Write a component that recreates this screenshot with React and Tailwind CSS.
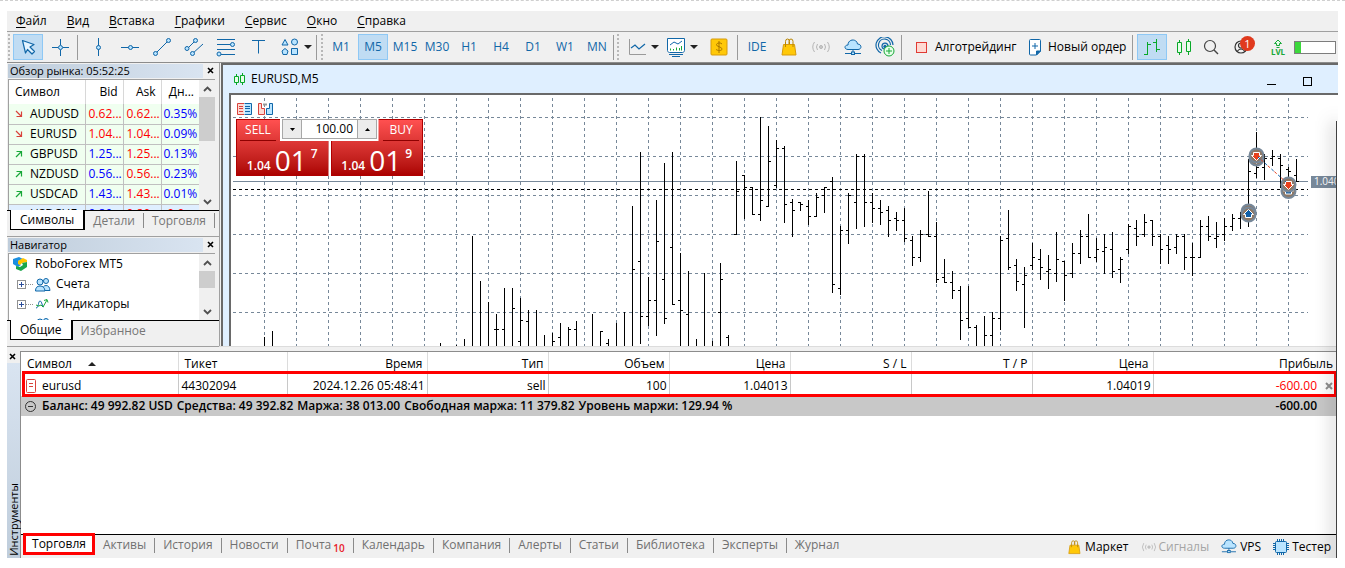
import React from "react";
import { clsx } from "clsx";

const BLUE = "#1167a8";
const SKY = "#b9e4ff";

const menu = ["Файл", "Вид", "Вставка", "Графики", "Сервис", "Окно", "Справка"];
const timeframes = ["M1", "M5", "M15", "M30", "H1", "H4", "D1", "W1", "MN"];

const quotes = [
  { symbol: "AUDUSD", up: false, bid: "0.62...", ask: "0.62...", day: "0.35%", bidUp: false },
  { symbol: "EURUSD", up: false, bid: "1.04...", ask: "1.04...", day: "0.09%", bidUp: false },
  { symbol: "GBPUSD", up: true, bid: "1.25...", ask: "1.25...", day: "0.13%", bidUp: true },
  { symbol: "NZDUSD", up: true, bid: "0.56...", ask: "0.56...", day: "0.23%", bidUp: true },
  { symbol: "USDCAD", up: true, bid: "1.43...", ask: "1.43...", day: "0.01%", bidUp: true },
  { symbol: "USDCHF", up: true, bid: "0.89...", ask: "0.89...", day: "-0.0...", bidUp: true, selected: true, dayDown: true },
];

const BOTTOM = 346;

// [x, high, low, open, close], null = no tick visible
const bars = [
  [264, 337, BOTTOM, null, null],
  [272, 331, BOTTOM, null, null],
  [440, 343, BOTTOM, null, null],
  [456, 345, BOTTOM, null, null],
  [464, 339, BOTTOM, null, null],
  [472, 236, BOTTOM, null, null],
  [480, 281, BOTTOM, null, null],
  [488, 302, BOTTOM, null, null],
  [496, 314, BOTTOM, 329, 329],
  [504, 288, BOTTOM, 329, null],
  [512, 288, BOTTOM, null, 308],
  [520, 298, BOTTOM, 341, 320],
  [528, 310, BOTTOM, 321, null],
  [536, 310, BOTTOM, null, null],
  [544, 335, BOTTOM, null, null],
  [552, 333, BOTTOM, null, 341],
  [560, 323, BOTTOM, 337, null],
  [568, 327, BOTTOM, null, 329],
  [576, 321, BOTTOM, 329, null],
  [592, 314, BOTTOM, null, null],
  [600, 331, BOTTOM, null, 331],
  [608, 339, BOTTOM, 343, null],
  [616, 323, BOTTOM, null, null],
  [624, 312, BOTTOM, null, null],
  [632, 206, BOTTOM, null, 269],
  [640, 152, 344, 261, 316],
  [648, 277, 326, 316, 300],
  [656, 200, 336, 300, 241],
  [664, 163, 324, 279, 318],
  [672, 152, 305, 247, 304],
  [680, 253, BOTTOM, 300, 310],
  [688, 271, BOTTOM, 314, null],
  [696, 339, BOTTOM, null, null],
  [704, 273, BOTTOM, null, null],
  [712, 341, BOTTOM, null, null],
  [720, 263, BOTTOM, 312, 279],
  [728, 335, BOTTOM, 337, null],
  [736, 161, 235, 234, 191],
  [744, 175, 219, 175, 187],
  [752, 187, 215, 187, 214],
  [760, 117, 221, 214, 200],
  [768, 126, 207, 206, 161],
  [776, 140, 188, 185, 148],
  [784, 146, 223, 148, 204],
  [792, 199, 237, 202, 210],
  [800, 202, 211, 202, 204],
  [808, 200, 225, 206, 216],
  [816, 193, 217, 216, 197],
  [824, 187, 213, 195, 187],
  [832, 177, 293, 181, 284],
  [840, 226, 295, 288, 230],
  [848, 193, 244, 230, 195],
  [856, 154, 229, 202, 156],
  [864, 154, 227, 156, 202],
  [872, 193, 223, 202, 208],
  [880, 200, 225, 208, 212],
  [888, 206, 237, 210, 220],
  [896, 212, 231, 218, 220],
  [904, 208, 242, 220, 238],
  [912, 236, 266, 240, 257],
  [920, 230, 262, 257, 234],
  [928, 191, 237, 234, 236],
  [936, 222, 283, 236, 279],
  [944, 259, 283, 277, 282],
  [952, 271, 299, 282, 290],
  [960, 286, 340, 290, 320],
  [968, 286, 328, 318, 327],
  [976, 325, BOTTOM, 327, null],
  [984, 316, BOTTOM, null, 335],
  [992, 312, BOTTOM, 335, 318],
  [1000, 236, 330, 318, 240],
  [1008, 210, 270, 238, 267],
  [1016, 259, 291, 265, 281],
  [1024, 267, 328, 284, 275],
  [1032, 243, 270, 265, 257],
  [1040, 249, 280, 259, 267],
  [1048, 255, 289, 271, 269],
  [1056, 232, 282, 273, 259],
  [1064, 261, 301, 261, 275],
  [1072, 243, 278, 273, 253],
  [1080, 230, 264, 253, 236],
  [1088, 214, 258, 236, 257],
  [1096, 238, 262, 257, 249],
  [1104, 234, 274, 251, 247],
  [1112, 232, 278, 249, 271],
  [1120, 257, 283, 269, 259],
  [1128, 224, 254, 249, 226],
  [1136, 220, 246, 228, 236],
  [1144, 214, 237, 234, 222],
  [1152, 220, 246, 220, 236],
  [1160, 234, 264, 236, 249],
  [1168, 236, 264, 245, 249],
  [1176, 234, 254, 247, 236],
  [1184, 234, 270, 236, 257],
  [1192, 243, 276, 257, 257],
  [1200, 220, 258, 257, 226],
  [1208, 216, 241, 226, 236],
  [1216, 222, 248, 238, 236],
  [1224, 218, 241, 234, 226],
  [1232, 214, 231, 226, 218],
  [1240, 212, 229, 218, null],
  [1248, 159, 227, null, 171],
  [1256, 132, 178, 173, 167],
  [1264, 154, 180, 167, 158],
  [1272, 150, 166, 158, 156],
  [1280, 154, 188, 158, 165],
  [1288, 167, 195, 169, 171],
  [1296, 159, 182, 175, 181],
];

const gridX = Array.from({ length: 33 }, (_, i) => 264 + i * 32);
const gridY = [117, 156, 195, 234, 273, 312];

const barPath = bars
  .map(([x, hi, lo, open, close]) => {
    let d = `M${x} ${hi}h1V${lo}h-1z`;
    if (open !== null) d += `M${x - 2} ${open}h2v1h-2z`;
    if (close !== null) d += `M${x + 1} ${close}h2v1h-2z`;
    return d;
  })
  .join("");

const Icon = ({ w = 20, h = 20, children, className }) => (
  <svg
    width={w}
    height={h}
    viewBox={`0 0 ${w} ${h}`}
    fill="none"
    stroke={BLUE}
    aria-hidden="true"
    className={clsx("shrink-0", className)}
  >
    {children}
  </svg>
);

const CursorIcon = () => (
  <Icon>
    <path d="M4.500 3.500l11.500 4-4 2.500 4.500 4.500-2.500 2.500-4.500-4.500-2 3.500z" fill="#e4f4ff" strokeWidth="1.200" strokeLinejoin="round" />
  </Icon>
);

const CrossIcon = () => (
  <Icon>
    <path d="M10.5 2v6M10.5 13v6M2 10.5h6M13 10.5h6" />
    <circle cx="10.5" cy="10.5" r="2" fill={SKY} />
  </Icon>
);

const VLineIcon = () => (
  <Icon>
    <path d="M10.5 1v18" />
    <circle cx="10.5" cy="10.5" r="2" fill={SKY} />
  </Icon>
);

const HLineIcon = () => (
  <Icon>
    <path d="M1 10.5h18" />
    <circle cx="10.5" cy="10.5" r="2" fill={SKY} />
  </Icon>
);

const TrendIcon = () => (
  <Icon>
    <path d="M4 16L16 4" />
    <circle cx="3.5" cy="16.5" r="2" fill={SKY} />
    <circle cx="16.5" cy="3.5" r="2" fill={SKY} />
  </Icon>
);

const ChannelIcon = () => (
  <Icon>
    <path d="M3 12L11 4M8 17L19 7" />
    <circle cx="3" cy="11.5" r="2" fill={SKY} />
    <circle cx="11.5" cy="3.5" r="2" fill={SKY} />
    <circle cx="8.5" cy="16.5" r="2" fill={SKY} />
  </Icon>
);

const FiboIcon = () => (
  <Icon>
    <path d="M1 2.5h18M1 7.5h15M1 12.5h18M5 17.5h14" />
    <circle cx="16.5" cy="7.5" r="2" fill={SKY} />
    <circle cx="3" cy="17" r="2" fill={SKY} />
  </Icon>
);

const TextIcon = () => (
  <Icon>
    <path d="M4 3.5h13M10.5 3.5v13" />
  </Icon>
);

const ShapesIcon = () => (
  <Icon>
    <g fill={SKY}>
      <path d="M5 2.5L8 8H2z" />
      <circle cx="14.5" cy="5" r="3" />
      <path d="M5 11.5l3 2.5-1 3.5H3L2 14z" />
      <path d="M11.5 11.5h6v6h-6z" />
    </g>
  </Icon>
);

const LineChartIcon = () => (
  <Icon>
    <path d="M2.500 2v15.500H19" stroke="#9a9a9a" />
    <path d="M4 11l4-3 4 4 6-5" strokeWidth="1.200" />
  </Icon>
);

const IndicatorIcon = () => (
  <Icon>
    <path d="M1.500 1.500h17v12c0 1-1 2-2 2h-13c-1 0-2-1-2-2z" fill="#fff" />
    <path d="M3 17.500h14M6 19.500h8" />
    <path d="M4 8l4-3 4 2 4-3" />
    <path d="M4.500 11.500v2M7.500 12v1.500M10.500 10.500v3M13.500 11v2.500M15.500 9v4.500" stroke="#18a838" />
  </Icon>
);

const DollarIcon = () => (
  <Icon w={18} h={18}>
    <rect x="1" y="1" width="16" height="16" rx="1" fill="#ffc808" stroke="#d79b0a" />
    <path d="M12 6c-1-1.500-5-1.500-5.500.5S12 9 12 11s-4.500 2-6 .3M9 3v12" stroke="#a97400" />
  </Icon>
);

const BagIcon = ({ small }) => (
  <Icon w={small ? 12 : 16} h={small ? 14 : 18} className="overflow-visible">
    <g transform={small ? "scale(.8)" : undefined}>
      <path d="M2.500 6.500h11l1.500 10.500H1z" fill="#ffc808" stroke="#d79b0a" />
      <path d="M4.500 9V3.500Q4.500 1 6.500 1T8.500 3.500V6M8 6V3.500Q8 1 10 1t2 2.500V9" stroke="#b98500" />
    </g>
  </Icon>
);

const SignalIcon = ({ small }) => (
  <Icon w={small ? 16 : 20} h={14} className="overflow-visible">
    <g transform={small ? "translate(0 1.500) scale(.8)" : undefined} stroke="#b5b5b5">
      <path d="M3.500 2Q0 7 3.500 12M6.500 4Q4.500 7 6.500 10M16.500 2Q20 7 16.500 12M13.500 4Q15.500 7 13.500 10" />
      <circle cx="10" cy="7" r="1.500" fill="#ccc" />
    </g>
  </Icon>
);

const CloudIcon = ({ small }) => (
  <Icon w={18} h={16}>
    <g transform={small ? "scale(.88)" : undefined}>
      <path d="M4 10.500C0 10.500 0 6 4 6 4-.5 13-.5 13.500 5c4.500 0 4.500 5.500.5 5.500z" fill={SKY} />
      <path d="M9 10.500v3M1 14.500h6M11 14.500h6" />
      <rect x="7.500" y="13" width="3" height="2.500" fill={SKY} />
    </g>
  </Icon>
);

const BroadcastIcon = () => (
  <Icon>
    <path d="M6 16A8.500 8.500 0 1 1 18 8M7 13.500A6 6 0 1 1 15.500 8M9 12a3 3 0 1 1 4-3" strokeWidth="1.200" />
    <circle cx="10" cy="9.500" r="1.300" fill={BLUE} />
    <circle cx="14" cy="14" r="5" fill="#e6ffe9" stroke="#18a838" />
    <path d="M14 11v6M11 14h6" stroke="#18a838" />
  </Icon>
);

const NewOrderIcon = () => (
  <Icon w={14} h={18}>
    <path d="M2.500 1.500h9q1 0 1 1V13l-4 4h-6q-1 0-1-1V2.500q0-1 1-1z" fill="#fff" />
    <path d="M12.500 13l-4 4v-4z" fill={BLUE} />
    <path d="M7 5v6M4 8h6" />
  </Icon>
);

const CandlesIcon = ({ small }) => (
  <Icon w={small ? 13 : 16} h={small ? 14 : 18}>
    {small ? (
      <g stroke="#08a828">
        <path d="M3.500 2v11M9.500 1v12" />
        <path d="M1.500 4.500h4v6h-4zM7.500 3.500h4v7h-4z" fill="#e6ffe9" />
      </g>
    ) : (
      <g stroke="#08a828">
        <path d="M3.500 2v15M12.500 1v16" />
        <path d="M1.500 4.500h4v10h-4zM10.500 3.500h4v10h-4z" fill="#e6ffe9" />
      </g>
    )}
  </Icon>
);

const BarsIcon = () => (
  <Icon w={18} h={18}>
    <path d="M4.500 4v13M1 16.500h3.500M4.500 6.500H8M13.500 1v13M10 4.500h3.500M13.500 11.500H17" stroke="#08a828" />
  </Icon>
);

const SearchIcon = () => (
  <Icon w={16} h={16}>
    <circle cx="7" cy="7" r="5.500" stroke="#444" strokeWidth="1.200" />
    <path d="M11 11l4 4" stroke="#444" strokeWidth="1.400" />
  </Icon>
);

const ProfileIcon = () => (
  <Icon w={16} h={16}>
    <g stroke="#333" strokeWidth="1.200">
      <circle cx="7" cy="8" r="6" />
      <circle cx="7" cy="6.500" r="2.500" />
      <path d="M3 12.500Q7 7.500 11 12.500" />
    </g>
  </Icon>
);

const LevelIcon = () => (
  <Icon w={14} h={9}>
    <path d="M7 1L3.500 4.500h2v2h3v-2h2zM5.500 8.500h3" stroke="#18a838" fill="#e6ffe9" />
  </Icon>
);

const CpuIcon = () => (
  <Icon w={16} h={16}>
    <path d="M4.500 0v16M6.500 0v16M8.500 0v16M10.500 0v16M0 4.500h16M0 6.500h16M0 8.500h16M0 10.500h16" />
    <rect x="2.500" y="2.500" width="11" height="11" rx="1" fill={SKY} />
  </Icon>
);

const PeopleIcon = () => (
  <Icon w={16} h={15}>
    <g fill={SKY}>
      <circle cx="11" cy="4" r="2.500" />
      <path d="M8 13.500q-.5-5 3-5t4 5z" />
      <circle cx="5" cy="5" r="3" />
      <path d="M.5 14q0-5 4.500-5t5 5z" />
    </g>
  </Icon>
);

const IndicatorsTreeIcon = () => (
  <Icon w={14} h={14}>
    <path d="M1 11c3 0 2-7 4-7s2 6 4 6" />
    <path d="M1 8q3 2 5 0l2 2 4-7M9 3.500l3-1 1 3" stroke="#18a838" />
  </Icon>
);

const BrandIcon = () => (
  <Icon w={15} h={14}>
    <g stroke="none">
      <path d="M0 2l6-2 4 2-5 2v2l3 2-3 2L0 7z" fill="#1b8fe0" />
      <path d="M5 4l5-3 4 2v2l-5 1-2 2-2-1z" fill="#ffc400" />
      <path d="M9 6l5-1v5l-6 4-5-2v-3l4 1 3-2z" fill="#1aa64a" />
    </g>
  </Icon>
);

const Caret = ({ up, className }) => (
  <svg width="8" height="4" viewBox="0 0 8 4" aria-hidden="true" className={clsx("shrink-0", className)}>
    <path d={up ? "M0 4h8L4 0z" : "M0 0h8L4 4z"} fill="#222" />
  </svg>
);

const CloseIcon = () => (
  <svg width="8" height="8" viewBox="0 0 8 8" aria-hidden="true">
    <path d="M1 1l5 5M6 1L1 6" stroke="#000" strokeWidth="1.600" />
  </svg>
);

const Chevron = ({ down }) => (
  <svg width="9" height="6" viewBox="0 0 9 6" fill="none" aria-hidden="true">
    <path d={down ? "M1 1l3.500 3.500L8 1" : "M1 5l3.500-3.500L8 5"} stroke="#505050" strokeWidth="1.800" />
  </svg>
);

const ToolButton = ({ label, active, narrow, children }) => (
  <button
    type="button"
    aria-label={label}
    className={clsx(
      "mx-px flex h-[26px] shrink-0 items-center justify-center border text-[#1167a8]",
      narrow ? "w-5" : "w-[30px]",
      active ? "border-[#8ec8f5] bg-[#c0dcf3]" : "border-transparent"
    )}
  >
    {children}
  </button>
);

const CaretButton = ({ label }) => (
  <button type="button" aria-label={label} className="-ml-[3px] flex h-[26px] w-[10px] shrink-0 items-center justify-center">
    <Caret />
  </button>
);

const Separator = ({ className }) => <div className={clsx("h-[25px] w-px shrink-0 bg-[#9a9a9a]", className)} />;

const Grip = () => <div className="mr-[2px] h-[26px] w-0 shrink-0 border-l-2 border-dotted border-[#b8b8b8]" />;

const Toolbar = () => (
  <div className="flex h-[31px] items-center border-b border-[#8c8c8c] pl-px text-xs">
    <Grip />
    <ToolButton label="Курсор" active><CursorIcon /></ToolButton>
    <ToolButton label="Перекрестие"><CrossIcon /></ToolButton>
    <Separator className="mr-1 ml-px" />
    <ToolButton label="Вертикальная линия"><VLineIcon /></ToolButton>
    <ToolButton label="Горизонтальная линия"><HLineIcon /></ToolButton>
    <ToolButton label="Трендовая линия"><TrendIcon /></ToolButton>
    <ToolButton label="Канал"><ChannelIcon /></ToolButton>
    <ToolButton label="Фибоначчи"><FiboIcon /></ToolButton>
    <ToolButton label="Текст"><TextIcon /></ToolButton>
    <ToolButton label="Фигуры"><ShapesIcon /></ToolButton>
    <CaretButton label="Выбор фигуры" />
    <Separator className="mr-1 ml-[3px]" />
    <Grip />
    {timeframes.map((tf) => (
      <ToolButton key={tf} label={tf} active={tf === "M5"}>{tf}</ToolButton>
    ))}
    <Separator className="mr-[3px]" />
    <Grip />
    <ToolButton label="Тип графика"><LineChartIcon /></ToolButton>
    <CaretButton label="Выбор типа графика" />
    <ToolButton label="Индикаторы"><IndicatorIcon /></ToolButton>
    <CaretButton label="Выбор индикатора" />
    <div className="w-1" />
    <ToolButton label="Финансы"><DollarIcon /></ToolButton>
    <Separator className="mr-[3px] ml-[2px]" />
    <ToolButton label="IDE">IDE</ToolButton>
    <ToolButton label="Маркет"><BagIcon /></ToolButton>
    <ToolButton label="Сигналы"><SignalIcon /></ToolButton>
    <ToolButton label="VPS"><CloudIcon /></ToolButton>
    <ToolButton label="Трансляция"><BroadcastIcon /></ToolButton>
    <Separator className="mr-[14px]" />
    <button type="button" className="flex w-[112px] shrink-0 items-center gap-2 whitespace-nowrap text-black">
      <span className="size-[11px] border border-[#e03a34] bg-[#ffd9d2]" />
      Алготрейдинг
    </button>
    <button type="button" className="flex w-[104px] shrink-0 items-center gap-[6px] whitespace-nowrap text-black">
      <NewOrderIcon />
      Новый ордер
    </button>
    <Separator className="mr-[3px]" />
    <ToolButton label="Бары" active><BarsIcon /></ToolButton>
    <ToolButton label="Свечи"><CandlesIcon /></ToolButton>
    <ToolButton label="Поиск" narrow><SearchIcon /></ToolButton>
    <div className="relative ml-1 shrink-0">
      <ToolButton label="Профиль"><ProfileIcon /></ToolButton>
      <span className="absolute top-[2px] right-[3px] flex size-[15px] items-center justify-center rounded-full bg-[#e03a1e] text-[11px] leading-none text-white">
        1
      </span>
    </div>
    <div className="ml-2 flex w-[24px] shrink-0 flex-col items-center">
      <LevelIcon />
      <span className="text-[8px] leading-[8px] font-bold text-[#18a838]">LVL</span>
    </div>
    <div className="mr-[2px] ml-auto h-[13px] w-[42px] shrink-0 border border-[#7d7d7d] bg-white">
      <div className="h-full w-[6px] bg-[#3cd83c]" />
    </div>
  </div>
);

const PanelTitle = ({ children }) => (
  <div className="flex h-[14px] items-center pr-1 pl-px">
    <h2 className="h-full flex-1 bg-linear-to-r from-[#bfcddb] to-[#d9e4f1] pl-[2px] text-[11px] leading-[13px]">{children}</h2>
    <button type="button" aria-label="Закрыть" className="flex h-[10px] w-3 items-center justify-end">
      <CloseIcon />
    </button>
  </div>
);

const Scroller = ({ thumb }) => (
  <div className="flex w-4 shrink-0 flex-col items-center bg-[#f0f0f0]">
    <button type="button" aria-label="Вверх" className="flex h-[17px] w-full shrink-0 items-center justify-center"><Chevron /></button>
    <div className={clsx("w-full bg-[#cdcdcd]", thumb)} />
    <button type="button" aria-label="Вниз" className="mt-auto flex h-[17px] w-full shrink-0 items-center justify-center"><Chevron down /></button>
  </div>
);

const DockTabs = ({ items, closed }) => (
  <div className="flex h-[21px] items-start border-t border-black pl-[3px] text-xs" role="tablist">
    {items.map((item, i) => (
      <button
        key={item}
        type="button"
        role="tab"
        aria-selected={i === 0}
        className={clsx(
          i === 0
            ? "-mt-px h-[20px] border border-t-0 border-r-2 border-black bg-white px-[9px] leading-[18px]"
            : "mt-[2px] h-[15px] border-[#8a8a8a] px-2 leading-[14px] text-[#777]",
          i > 0 && (closed || i < items.length - 1) && "border-r"
        )}
      >
        {item}
      </button>
    ))}
  </div>
);

const Trend = ({ up }) => (
  <svg width="8" height="8" viewBox="0 0 8 8" fill="none" className="inline-block" aria-hidden="true">
    <path d={up ? "M1 7l5.500-5.500M1.500 1.500h5v5" : "M1 1l5.500 5.500M1.500 6.500h5v-5"} stroke={up ? "#18a838" : "#d8433c"} strokeWidth="1.200" />
  </svg>
);

const MarketWatch = () => (
  <section className="border-b border-[#a0a0a0] pt-px pb-[5px]">
    <PanelTitle>Обзор рынка: 05:52:25</PanelTitle>
    <div className="mt-px mr-1 ml-px flex h-[131px] overflow-hidden border-t border-l border-[#a0a0a0] bg-white">
      <div className="flex-1 overflow-hidden">
        <table className="w-full table-fixed border-collapse text-xs">
          <colgroup>
            <col className="w-[76px]" />
            <col className="w-[38px]" />
            <col className="w-[38px]" />
            <col />
          </colgroup>
          <thead>
            <tr className="h-6">
              <th className="border-r border-[#d8d8d8] pl-[6px] text-left font-normal">Символ</th>
              <th className="border-r border-[#d8d8d8] pr-[5px] text-right font-normal">Bid</th>
              <th className="border-r border-[#d8d8d8] pr-[5px] text-right font-normal">Ask</th>
              <th className="pr-[5px] text-right font-normal">Дн...</th>
            </tr>
          </thead>
          <tbody>
            {quotes.map((q) => (
              <tr key={q.symbol} className={clsx("h-5 border-b border-[#c0c0c0]", q.selected ? "bg-[#dfefff]" : "bg-[#f0fff0]")}>
                <td className="border-r border-[#c0c0c0] pl-[6px] whitespace-nowrap">
                  <span className="flex items-center gap-[7px]">
                    <Trend up={q.up} />
                    {q.symbol}
                  </span>
                </td>
                <td className={clsx("border-r border-[#c0c0c0] pl-[3px] whitespace-nowrap", q.bidUp ? "text-[#0000ff]" : "text-[#ff0000]")}>{q.bid}</td>
                <td className="border-r border-[#c0c0c0] pl-[3px] whitespace-nowrap text-[#ff0000]">{q.ask}</td>
                <td className={clsx("pl-[2px] whitespace-nowrap", q.dayDown ? "text-[#ff0000]" : "text-[#0000ff]")}>{q.day}</td>
              </tr>
            ))}
          </tbody>
        </table>
      </div>
      <Scroller thumb="h-[44px]" />
    </div>
    <DockTabs items={["Символы", "Детали", "Торговля"]} closed />
  </section>
);

const TreeNode = ({ icon, children }) => (
  <li className="flex h-5 items-center">
    <button type="button" aria-label="Развернуть" className="ml-1 flex size-[9px] items-center justify-center border border-[#919191] bg-white">
      <svg width="5" height="5" viewBox="0 0 5 5" aria-hidden="true"><path d="M0 2.500h5M2.500 0v5" stroke="#2b4e9b" /></svg>
    </button>
    <span className="w-[7px] border-t border-dotted border-[#909090]" />
    <span className="mr-[5px] ml-[2px] w-4">{icon}</span>
    {children}
  </li>
);

const Navigator = () => (
  <section className="border-b border-[#a0a0a0] pt-px pb-[5px]">
    <PanelTitle>Навигатор</PanelTitle>
    <div className="mt-px mr-1 ml-px flex h-[67px] overflow-hidden border-t border-l border-[#a0a0a0] bg-white">
      <ul className="flex-1 pl-1 text-xs">
        <li className="flex h-5 items-center gap-[7px]">
          <BrandIcon />
          RoboForex MT5
        </li>
        <TreeNode icon={<PeopleIcon />}>Счета</TreeNode>
        <TreeNode icon={<IndicatorsTreeIcon />}>Индикаторы</TreeNode>
        <TreeNode icon={<PeopleIcon />}>Советники</TreeNode>
      </ul>
      <Scroller thumb="h-[17px]" />
    </div>
    <DockTabs items={["Общие", "Избранное"]} />
  </section>
);

const DealMarker = ({ x, y, sell }) => (
  <g>
    <circle cx={x} cy={y} r="7" fill="#8d7765" stroke="#778899" strokeWidth="2" />
    <path
      d={sell ? `M${x} ${y + 5}l-5-5h2v-3h6v3h2z` : `M${x} ${y - 5}l-5 5h2v3h6v-3h2z`}
      fill={sell ? "#e8401c" : "#0f5fa8"}
      stroke="#fff"
    />
  </g>
);

const PriceChart = () => (
  <svg viewBox="231 95 1107 251" preserveAspectRatio="xMinYMin slice" className="block h-[251px] w-full" role="img" aria-label="EURUSD,M5">
    <g stroke="#778899" strokeDasharray="3 3" shapeRendering="crispEdges">
      {gridX.map((x) => <path key={x} d={`M${x + 0.5} 98V346`} />)}
      {gridY.map((y) => <path key={y} d={`M233 ${y + 0.5}H1308`} />)}
    </g>
    <g shapeRendering="crispEdges">
      <path d="M233 181.500H1308" stroke="#778899" />
      <path d="M233 189.500H1308" stroke="#000" strokeDasharray="3 3" />
      <path d={barPath} fill="#000" />
    </g>
    <DealMarker x={1256.5} y={158.5} sell />
    <DealMarker x={1256.5} y={155.5} sell />
    <DealMarker x={1288.5} y={191} />
    <DealMarker x={1288.5} y={184.5} sell />
    <DealMarker x={1248.5} y={211.5} sell />
    <DealMarker x={1248.5} y={214.5} />
    <path d="M1258 157L1286 182" stroke="#0f5fa8" strokeDasharray="3 6" />
    <path d="M1258 157L1286 182" stroke="#e8401c" strokeDasharray="3 6" strokeDashoffset="-4" />
    <rect x="1311" y="176" width="26" height="12" fill="#778899" />
    <text x="1314" y="185" fontSize="10" fill="#fff">1.040</text>
  </svg>
);

const DealButton = ({ label, pips, point, right }) => (
  <button
    type="button"
    className={clsx(
      "flex h-[57px] flex-1 flex-col justify-between border border-[#b00000] bg-linear-to-b from-[#ff5050] to-[#ac0000] text-white",
      right
        ? "items-end [clip-path:polygon(48px_0,100%_0,100%_100%,0_100%,0_22px,48px_22px)]"
        : "items-start [clip-path:polygon(0_0,44px_0,44px_22px,100%_22px,100%_100%,0_100%)]"
    )}
  >
    <span className="mx-[3px] w-[36px] border-b border-[#8e0000] pb-px text-center text-xs leading-[19px]">{label}</span>
    <span className="flex w-full items-end justify-center gap-1 pb-[3px]">
      <span className="text-xs leading-3 font-semibold">1.04</span>
      <span className="text-[28px] leading-6">{pips}</span>
      <span className="self-start text-xs leading-3 font-semibold">{point}</span>
    </span>
  </button>
);

const OneClickPanel = () => (
  <div className="absolute top-[7px] left-[5px] w-[187px]">
    <div className="flex gap-1 pb-[3px]">
      <Icon w={17} h={14}>
        <path d="M8 1.500H1.500v11H8" stroke="#d8433c" fill="#ffd9d2" />
        <path d="M8.500 1.500h7v11h-7" fill={SKY} />
        <path d="M3 4.500h4M3 6.500h4M3 9.500h4" stroke="#d8433c" />
        <path d="M9 4.500h5M9 6.500h5M9 9.500h5" />
      </Icon>
      <Icon w={17} h={14}>
        <path d="M1.500 1.500h3v5h3v6h-6z" stroke="#d8433c" fill="#ffd9d2" />
        <path d="M15.500 1.500h-3v5h-3v6h6z" fill={SKY} />
        <path d="M6 2.500h4" stroke="#999" strokeWidth="2" />
      </Icon>
    </div>
    <div className="relative flex gap-[2px] bg-white">
      <DealButton label="SELL" pips="01" point="7" />
      <DealButton label="BUY" pips="01" point="9" right />
      <div className="absolute top-0 left-[46px] flex h-5 w-[95px] border border-[#a8a8a8] bg-white">
        <button type="button" aria-label="Меньше" className="flex w-[19px] items-center justify-center border-r border-[#a8a8a8] bg-[#ececec]">
          <svg width="5" height="3" viewBox="0 0 5 3" aria-hidden="true"><path d="M0 0h5L2.500 3z" /></svg>
        </button>
        <input aria-label="Объем" defaultValue="100.00" className="w-0 flex-1 pr-1 text-right text-xs outline-none" />
        <button type="button" aria-label="Больше" className="flex w-[19px] items-center justify-center border-l border-[#a8a8a8] bg-[#ececec]">
          <svg width="5" height="3" viewBox="0 0 5 3" aria-hidden="true"><path d="M0 3h5L2.500 0z" /></svg>
        </button>
      </div>
    </div>
  </div>
);

const ChartWindow = () => (
  <section className="min-w-0 flex-1 border-t-2 border-l-2 border-[#696969] bg-[#dfefff]">
    <header className="flex h-[28px] items-center pl-[10px] text-xs">
      <CandlesIcon small />
      <h1 className="ml-[5px]">EURUSD,M5</h1>
      <button type="button" aria-label="Свернуть" className="mt-[10px] ml-auto h-px w-[9px] bg-black" />
      <button type="button" aria-label="Развернуть" className="mt-1 mr-[26px] ml-[27px] size-[9px] border border-black" />
    </header>
    <div className="relative ml-[6px] overflow-hidden border-t-2 border-l-2 border-[#696969] bg-white">
      <PriceChart />
      <OneClickPanel />
    </div>
  </section>
);

const tradeColumns = ["Время", "Тип", "Объем", "Цена", "S / L", "T / P", "Цена"];
const tradeValues = ["2024.12.26 05:48:41", "sell", "100", "1.04013", "", "", "1.04019"];

const summary = [
  "Баланс: 49 992.82 USD",
  "Средства: 49 392.82",
  "Маржа: 38 013.00",
  "Свободная маржа: 11 379.82",
  "Уровень маржи: 129.94 %",
];

const TradeTable = () => (
  <div className="relative">
    <table className="w-full table-fixed border-collapse text-xs">
      <colgroup>
        <col className="w-[157px]" />
        <col className="w-[109px]" />
        <col className="w-[140px]" />
        <col className="w-[121px]" />
        <col className="w-[121px]" />
        <col className="w-[121px]" />
        <col className="w-[121px]" />
        <col className="w-[121px]" />
        <col className="w-[121px]" />
        <col />
      </colgroup>
      <thead>
        <tr className="h-[22px]">
          <th className="border-r border-[#dcdcdc] pt-[2px] pl-[6px] text-left font-normal">
            <span className="flex items-center gap-4">Символ <Caret up /></span>
          </th>
          <th className="border-r border-[#dcdcdc] pt-[2px] pl-[6px] text-left font-normal">Тикет</th>
          {tradeColumns.map((c, i) => (
            <th key={i} className="border-r border-[#dcdcdc] pt-[2px] pr-1 text-right font-normal">{c}</th>
          ))}
          <th className="pt-[2px] pr-1 text-right font-normal">Прибыль</th>
        </tr>
      </thead>
      <tbody>
        <tr className="h-[22px]">
          <td className="border-r border-[#c8c8c8] pt-px pl-1">
            <span className="flex items-center gap-[6px]">
              <Icon w={11} h={16}>
                <rect x="1.500" y="1.500" width="9" height="13" rx="1" stroke="#d8433c" fill="#fff" />
                <path d="M4 5.500h4M4 8.500h4" stroke="#d8433c" />
              </Icon>
              eurusd
            </span>
          </td>
          <td className="border-r border-[#c8c8c8] pt-px pl-[3px]">44302094</td>
          {tradeValues.map((v, i) => (
            <td key={i} className="border-r border-[#c8c8c8] pt-px pr-[2px] text-right whitespace-nowrap">{v}</td>
          ))}
          <td className="pt-px pr-1">
            <span className="flex items-center justify-end gap-2 text-[#ff0000]">
              -600.00
              <button type="button" aria-label="Закрыть позицию">
                <svg width="8" height="8" viewBox="0 0 8 8" aria-hidden="true"><path d="M1 1l6 6M7 1L1 7" stroke="#8f8f8f" strokeWidth="2" /></svg>
              </button>
            </span>
          </td>
        </tr>
        <tr className="h-5 bg-[#c8c8c8] font-semibold">
          <td colSpan={9} className="pl-1">
            <span className="flex items-center whitespace-nowrap">
              <Icon w={11} h={11} className="mr-[6px]">
                <circle cx="5.500" cy="5.500" r="5" stroke="#333" />
                <path d="M3 5.500h5" stroke="#333" />
              </Icon>
              <span className="flex gap-1">
                {summary.map((s) => <span key={s}>{s}</span>)}
              </span>
            </span>
          </td>
          <td className="pr-5 text-right">-600.00</td>
        </tr>
      </tbody>
    </table>
    <div className="pointer-events-none absolute top-[19px] right-0 left-px h-[26px] border-3 border-[#ff0000]" />
  </div>
);

const toolTabs = ["Активы", "История", "Новости", "Почта", "Календарь", "Компания", "Алерты", "Статьи", "Библиотека", "Эксперты", "Журнал"];

const Toolbox = () => (
  <section className="mt-1 flex h-[207px]">
    <div className="flex w-[13px] shrink-0 flex-col items-center pt-px">
      <button type="button" aria-label="Закрыть" className="flex h-[10px] w-full items-center pl-[2px]"><CloseIcon /></button>
      <div className="mt-px flex w-full flex-1 items-center bg-linear-to-b from-[#d9e4f1] to-[#bfcddb] pb-[2px]">
        <h2 className="mt-auto w-full rotate-180 text-[11px] leading-[13px] [writing-mode:vertical-rl]">Инструменты</h2>
      </div>
    </div>
    <div className="flex min-w-0 flex-1 flex-col border-t border-l border-[#8c8c8c]">
      <div className="flex-1 bg-white pr-px">
        <TradeTable />
      </div>
      <div className="flex h-[24px] items-start border-t border-black text-xs">
        <div role="tablist" className="flex items-start pl-[2px]">
          <button type="button" role="tab" aria-selected="true" className="-mt-[2px] h-[22px] w-[72px] border-3 border-[#ff0000] bg-white leading-[16px]">
            Торговля
          </button>
          {toolTabs.map((t) => (
            <button
              key={t}
              type="button"
              role="tab"
              aria-selected="false"
              className="mt-[3px] flex h-[15px] border-r border-[#8a8a8a] px-2 leading-[13px] whitespace-nowrap text-[#707070] last:border-r-0"
            >
              {t}
              {t === "Почта" && <span className="ml-[2px] self-end text-[10px] leading-[10px] font-semibold text-[#e8202c]">10</span>}
            </button>
          ))}
        </div>
        <div className="mt-1 ml-auto flex items-center gap-3 pr-[7px]">
          <button type="button" className="flex items-center gap-[5px]"><BagIcon small />Маркет</button>
          <button type="button" className="flex items-center gap-[2px] text-[#a5a5a5]"><SignalIcon small />Сигналы</button>
          <button type="button" className="flex items-center gap-px"><CloudIcon small />VPS</button>
          <button type="button" className="flex items-center gap-[3px]"><CpuIcon />Тестер</button>
        </div>
      </div>
    </div>
  </section>
);

const App = () => (
  <div className="min-h-screen border-t border-dashed border-[#cfcfcf] bg-white px-[7px] pt-[10px] font-['Open_Sans','Noto_Sans',sans-serif] text-black">
    <main className="relative overflow-hidden bg-[#f0f0f0]">
      <nav className="flex h-[21px] items-center gap-5 border-b border-[#a0a0a0] pl-[9px] text-xs">
        {menu.map((m) => (
          <button key={m} type="button"><u className="underline-offset-2">{m[0]}</u>{m.slice(1)}</button>
        ))}
      </nav>
      <Toolbar />
      <div className="flex h-[284px] border-b border-[#dcdcdc]">
        <aside className="mr-px w-[213px] shrink-0 border-r border-[#a0a0a0]">
          <MarketWatch />
          <Navigator />
        </aside>
        <ChartWindow />
      </div>
      <Toolbox />
      {/* edge of the window lying to the right */}
      <div className="absolute top-[110px] right-0 -bottom-5 w-[2px] border-l border-[#404040] bg-white shadow-[-2px_0_16px_rgba(0,0,0,0.7)]" />
    </main>
  </div>
);

export default App;
